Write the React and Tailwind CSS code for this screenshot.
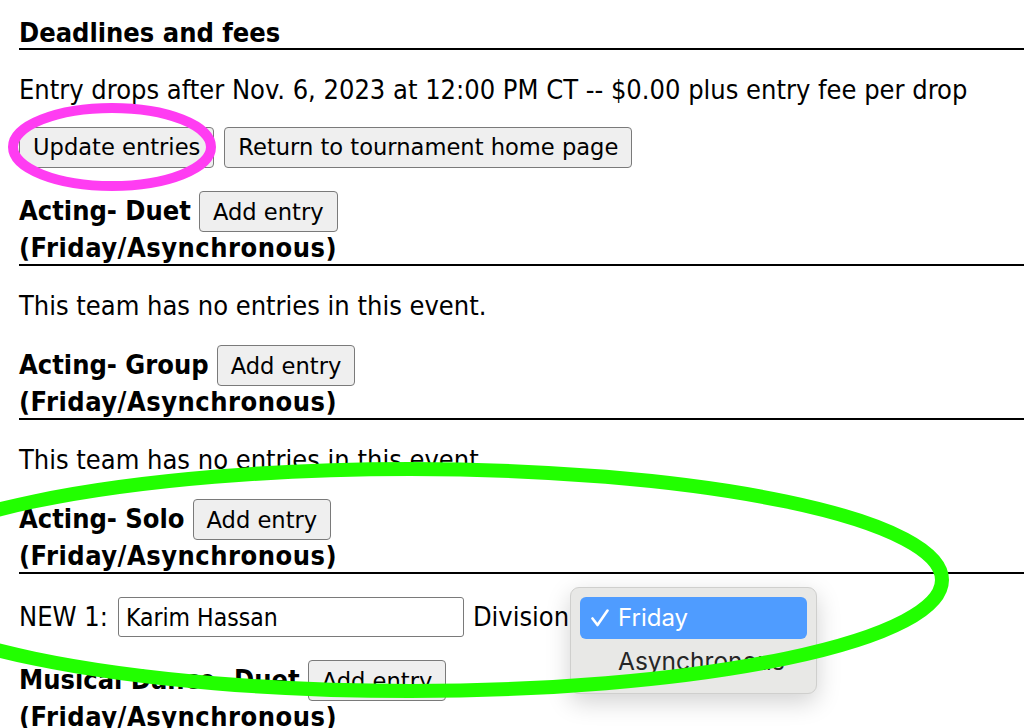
import React from "react";

const body = { fontFamily: '"DejaVu Sans Condensed", "DejaVu Sans", Verdana, sans-serif' };
const control = { fontFamily: '"DejaVu Sans", Verdana, sans-serif' };

function Btn({ children }) {
  return (
    <button
      className="h-[41px] rounded-[4px] border-[1.5px] border-[#7a7a7a] bg-[#efefef] px-[13px] text-[22.6px] leading-none text-black"
      style={control}
    >
      {children}
    </button>
  );
}

function EventHead({ name }) {
  return (
    <div className="mt-[23px] border-b-2 border-black font-bold">
      <div className="flex h-[41px] items-center gap-[8px]">
        <span>{name}</span>
        <span className="font-normal">
          <Btn>Add entry</Btn>
        </span>
      </div>
      <div className="leading-[32px] tracking-[0.5px]">(Friday/Asynchronous)</div>
    </div>
  );
}

function Empty() {
  return <p className="mt-[24px] leading-[32px]">This team has no entries in this event.</p>;
}

export default function App() {
  return (
    <div className="relative h-[728px] w-[1024px] overflow-hidden bg-white pl-[19px] text-[27px] text-black" style={body}>
      <h3 className="mt-0 border-b-2 border-black pt-[18px] font-bold leading-[30px]">Deadlines and fees</h3>
      <p className="mt-[24px] leading-[32px]">
        Entry drops after Nov. 6, 2023 at 12:00 PM CT -- $0.00 plus entry fee per drop
      </p>
      <div className="mt-[21px] flex gap-[10px]">
        <Btn>Update entries</Btn>
        <Btn>Return to tournament home page</Btn>
      </div>

      <EventHead name="Acting- Duet" />
      <Empty />
      <EventHead name="Acting- Group" />
      <Empty />
      <EventHead name="Acting- Solo" />

      <div className="mt-[23px] flex h-[40px] items-center">
        <span>NEW 1:</span>
        <input
          readOnly
          value="Karim Hassan"
          className="ml-[10px] h-[40px] w-[346px] rounded-[3px] border-[1.5px] border-[#7a7a7a] px-[7px] text-[24.5px] text-black outline-none"
          style={body}
        />
        <span className="ml-[9px]">Division</span>
      </div>

      <EventHead name="Musical Dance- Duet" />

      {/* native select popup */}
      <div
        className="absolute left-[570px] top-[587px] w-[247px] rounded-[9px] border border-[#cfcfcd] bg-[#e8e8e6] p-[9px] shadow-[0_8px_24px_rgba(0,0,0,0.18)]"
        style={{ fontFamily: 'Inter, "Noto Sans", sans-serif' }}
      >
        <div className="flex h-[42px] items-center rounded-[6px] bg-[#4f9cff] pl-[11px] text-[24px] text-white">
          <svg width="18" height="18" viewBox="0 0 18 18" className="mr-[9px]">
            <path d="M1.5 9.5 6.5 16 16.5 1.5" fill="none" stroke="white" strokeWidth="2.6" strokeLinecap="round" strokeLinejoin="round" />
          </svg>
          <span>Friday</span>
        </div>
        <div className="flex h-[45px] items-center pl-[38px] text-[24.5px] text-[#262626]">Asynchronous</div>
      </div>

      {/* annotations */}
      <svg className="pointer-events-none absolute left-0 top-0" width="1024" height="728">
        <ellipse cx="112" cy="147" rx="99" ry="39" fill="none" stroke="#ff3cf2" strokeWidth="10" />
        <ellipse cx="410" cy="580" rx="532" ry="111" fill="none" stroke="#22ff00" strokeWidth="14" />
      </svg>
    </div>
  );
}
